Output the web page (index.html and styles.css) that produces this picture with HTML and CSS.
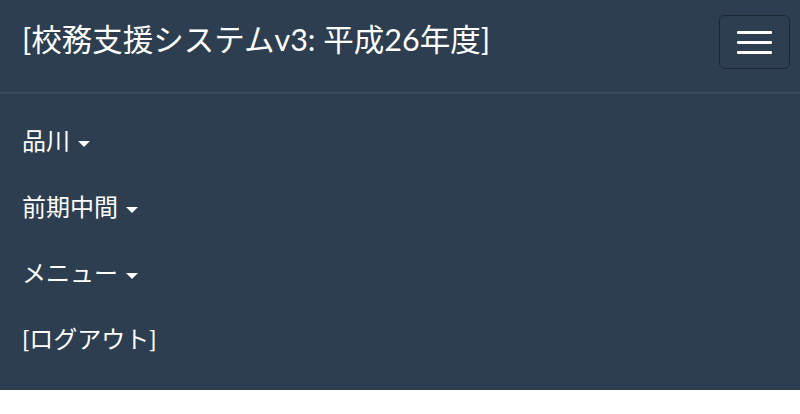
FILE: index.html
```html
<!DOCTYPE html>
<html lang="ja">
<head>
<meta charset="utf-8">
<title>校務支援システム</title>
<link rel="stylesheet" href="styles.css">
</head>
<body>
<nav class="navbar">
  <div class="navbar-header">
    <a class="brand" href="#">[校務支援システムv3: 平成26年度]</a>
    <button class="toggle" type="button" aria-label="menu">
      <span class="bar"></span>
      <span class="bar"></span>
      <span class="bar"></span>
    </button>
  </div>
  <div class="collapse">
    <ul class="nav">
      <li><a href="#">品川 <span class="caret"></span></a></li>
      <li><a href="#">前期中間 <span class="caret"></span></a></li>
      <li><a href="#">メニュー <span class="caret"></span></a></li>
      <li><a href="#">[ログアウト]</a></li>
    </ul>
  </div>
</nav>
</body>
</html>
```
FILE: styles.css
```css
html, body {
  margin: 0;
  padding: 0;
  background: #ffffff;
}
body {
  font-family: Lato, "Noto Sans CJK JP", sans-serif;
  color: #ffffff;
}
.navbar {
  background: #2c3e50;
  height: 390px;
  display: flex;
  flex-direction: column;
}
.navbar-header {
  height: 92px;
  display: flex;
  justify-content: space-between;
  align-items: flex-start;
  flex-shrink: 0;
}
.brand {
  color: #ffffff;
  text-decoration: none;
  font-size: 30.5px;
  line-height: 32px;
  padding: 23px 0 0 22px;
  white-space: nowrap;
}
.toggle {
  margin: 15px 10px 0 0;
  width: 71px;
  height: 54px;
  box-sizing: border-box;
  background: transparent;
  border: 1.5px solid #1b2631;
  border-radius: 6px;
  padding: 0;
  display: flex;
  flex-direction: column;
  align-items: center;
  justify-content: center;
  gap: 7px;
}
.bar {
  display: block;
  width: 35px;
  height: 3px;
  background: #ffffff;
  border-radius: 1px;
}
.collapse {
  box-shadow: inset 0 1.5px 0 rgba(255, 255, 255, 0.1);
  padding-top: 16px;
}
.nav {
  list-style: none;
  margin: 0;
  padding: 0;
}
.nav li a {
  display: block;
  color: #ffffff;
  text-decoration: none;
  font-size: 24px;
  line-height: 36px;
  padding: 15px 22px;
}
.caret {
  display: inline-block;
  width: 0;
  height: 0;
  margin-left: 2px;
  vertical-align: middle;
  border-top: 6px solid #ffffff;
  border-left: 6px solid transparent;
  border-right: 6px solid transparent;
}
```
